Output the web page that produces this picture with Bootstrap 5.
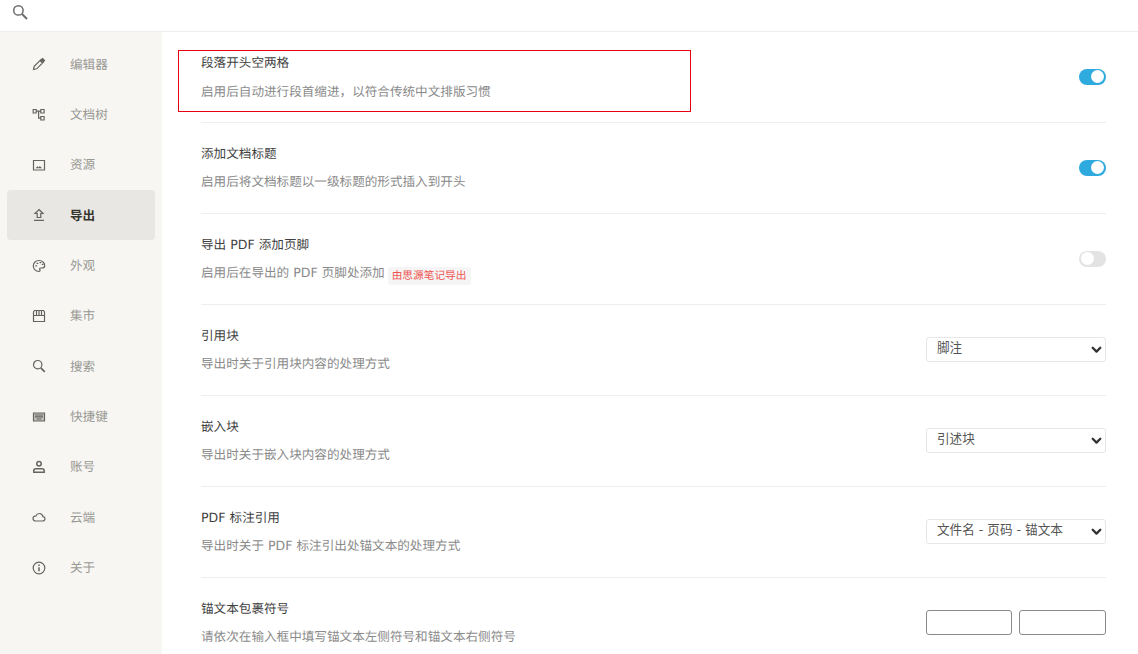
<!DOCTYPE html>
<html lang="zh-CN">

<head>
    <meta charset="UTF-8" />
    <meta name="viewport" content="width=device-width, initial-scale=1" />
    <title>导出设置</title>
    <link href="https://cdn.jsdelivr.net/npm/bootstrap@5.3.3/dist/css/bootstrap.min.css" rel="stylesheet">
    <script src="https://cdn.jsdelivr.net/npm/bootstrap@5.3.3/dist/js/bootstrap.bundle.min.js"></script>

    <style>
        html,
        body {
            height: 100%;
            overflow: hidden;
        }

        body {
            background: #fff;
            font-family: "DejaVu Sans", "Noto Sans CJK SC", sans-serif;
            font-size: 12.6px;
            color: #3f3f3f;
            text-rendering: geometricPrecision;
        }

        .top-bar {
            height: 32px;
            border-bottom: 1px solid #eeeeee;
            padding-left: 12px;
            padding-top: 3px;
        }

        .side-nav {
            width: 162px;
            height: 622px;
            background: #f7f6f3;
            padding: 7px 7px 0;
        }

        .side-item {
            height: 50.35px;
            padding-left: 24px;
            gap: 23px;
            color: #999994;
            border-radius: 4px;
        }

        .side-item span {
            padding-top: 2px;
        }

        .side-item svg {
            width: 16px;
            height: 16px;
            flex: none;
            fill: none;
            stroke: #66645f;
            stroke-width: 1.2;
        }

        .side-item.on {
            background: #e8e7e3;
            color: #37352f;
            font-weight: 700;
        }

        .set-pane {
            flex: 1;
            padding: 0 32px 0 39px;
            position: relative;
        }

        .set-row {
            height: 91px;
            border-bottom: 1px solid #eeeeee;
        }

        .set-title {
            padding-top: 21.5px;
            line-height: 18px;
            color: #3f3f3f;
        }

        .set-desc {
            margin-top: 10px;
            line-height: 18px;
            color: #8a8a8a;
        }

        .set-row:first-of-type .set-title {
            padding-top: 22px;
        }

        .set-row:first-of-type .set-desc {
            margin-top: 11px;
        }

        .red-tag {
            display: inline-block;
            background: #f5f5f5;
            color: #ef5350;
            font-size: 10.7px;
            line-height: 18px;
            padding: 0 4px;
            margin-left: 3px;
            border-radius: 3px;
            vertical-align: -2px;
        }

        .red-box {
            position: absolute;
            left: 16px;
            top: 18px;
            width: 513px;
            height: 62px;
            border: 1px solid #e60012;
            pointer-events: none;
        }

        .set-switch {
            width: 27px;
            height: 16.5px;
            border-radius: 9px;
            background: #e3e3e3;
            position: relative;
            flex: none;
        }

        .set-switch::after {
            content: "";
            position: absolute;
            left: 1.5px;
            top: 1.7px;
            width: 13px;
            height: 13px;
            border-radius: 50%;
            background: #fff;
        }

        .set-switch.is-on {
            background: #2eaadf;
        }

        .set-switch.is-on::after {
            left: 12px;
        }

        .set-select.form-select {
            width: 180px;
            height: 25px;
            min-height: 0;
            margin-top: -1px;
            font-size: 12.6px;
            line-height: 16px;
            padding: 2px 24px 5px 10px;
            color: #555555;
            border: 1px solid #e6e6e6;
            border-radius: 3px;
            background-position: right 3px center;
            background-size: 11px 11px;
            background-image: url("data:image/svg+xml,%3csvg xmlns='http://www.w3.org/2000/svg' viewBox='0 0 16 16'%3e%3cpath fill='none' stroke='%23333' stroke-linecap='round' stroke-linejoin='round' stroke-width='3.4' d='M2.5 5.5l5.5 5.5 5.5-5.5'/%3e%3c/svg%3e");
        }

        .set-inputs {
            width: 180px;
            gap: 7px;
            margin-top: -1px;
        }

        .set-inputs .form-control {
            height: 25px;
            min-height: 0;
            padding: 2px 6px;
            font-size: 12.6px;
            border: 1px solid #8a8a8a;
            border-radius: 3px;
        }

        .set-inputs .form-control:first-child {
            flex: 0 0 86px;
            width: 86px;
        }

        .set-inputs .form-control:last-child {
            flex: 1 1 0;
        }
    </style>
</head>

<body>
    <div class="top-bar">
        <svg width="17" height="17" viewBox="0 0 17 17" fill="none" stroke="#6b6b6b" stroke-width="1.5">
            <circle cx="6.4" cy="6.4" r="4.7" />
            <path d="M10 10l5 5" stroke-width="1.9" />
        </svg>
    </div>

    <div class="d-flex">
        <div class="side-nav">
            <div class="side-item d-flex align-items-center">
                <svg viewBox="0 0 16 16"><path d="M2.500 13.500l.7-3.200L10 3.500l2.500 2.500-6.800 6.800zM9 4.500l2.500 2.500" /><path d="M11.500 2.500l2 2-1 1-2-2z" fill="#66645f" /></svg>
                <span>编辑器</span>
            </div>
            <div class="side-item d-flex align-items-center">
                <svg viewBox="0 0 16 16"><path d="M2.200 2.500h3v3.500h-3zM9.800 2.500h3.300v3.500H9.800zM9.800 9.500h3.300v3.500H9.800zM5.200 4.200h4.600M7.600 4.200v7h2.200" /></svg>
                <span>文档树</span>
            </div>
            <div class="side-item d-flex align-items-center">
                <svg viewBox="0 0 16 16"><path d="M2.500 3.500h11v9.500h-11z" /><path d="M4.500 11.300l2-2 1.200 1.200 1-1.400 2.500 2.200z" fill="#66645f" stroke="none" /></svg>
                <span>资源</span>
            </div>
            <div class="side-item on d-flex align-items-center">
                <svg viewBox="0 0 16 16"><path d="M8 2.500l4 4H9.800v4H6.200v-4H4zM3 13.300h10" /></svg>
                <span>导出</span>
            </div>
            <div class="side-item d-flex align-items-center">
                <svg viewBox="0 0 16 16"><path d="M8 2.500c3.200 0 5.700 2.200 5.700 4.900 0 1.800-1.400 2.600-3 2.600H9.500c-1 0-1.100 1-.6 1.600.5.700.1 1.900-.9 1.900-3.200 0-5.700-2.500-5.700-5.600S4.800 2.500 8 2.500z" /><path d="M4.800 7.800h.8M6 5.300h.8M9 4.600h.8M11.200 6.300h.8" stroke-linecap="round" stroke-width="1.300" /></svg>
                <span>外观</span>
            </div>
            <div class="side-item d-flex align-items-center">
                <svg viewBox="0 0 16 16"><path d="M3.500 2.500h9l1 1.500v3.500h-11V4zM2.500 7.500v6h11v-6M5.500 2.800v4.500M8 2.800v4.500M10.500 2.800v4.500" /></svg>
                <span>集市</span>
            </div>
            <div class="side-item d-flex align-items-center">
                <svg viewBox="0 0 16 16"><circle cx="6.700" cy="6.700" r="4.200" /><path d="M9.800 9.800l4 4" stroke-width="1.700" /></svg>
                <span>搜索</span>
            </div>
            <div class="side-item d-flex align-items-center">
                <svg viewBox="0 0 16 16"><path d="M2.500 4h11v8h-11z" fill="#66645f" fill-opacity=".35" /><path d="M4 6h8M4 7.800h8M5.500 10h5" stroke-width="1.200" /></svg>
                <span>快捷键</span>
            </div>
            <div class="side-item d-flex align-items-center">
                <svg viewBox="0 0 16 16"><circle cx="8" cy="4.800" r="2.200" stroke-width="1.500" /><path d="M2.800 13.300v-1.600c0-1.300 1-2 2.200-2h6c1.200 0 2.200.7 2.200 2v1.600z" stroke-width="1.500" /></svg>
                <span>账号</span>
            </div>
            <div class="side-item d-flex align-items-center">
                <svg viewBox="0 0 16 16"><path d="M4.800 12h6.700c1.500 0 2.500-1 2.500-2.200 0-1.200-.9-2.100-2-2.200C11.600 5.600 10 4.500 8.300 4.500c-1.500 0-2.800 1-3.300 2.400-1.700.1-3 1.200-3 2.600 0 1.400 1.200 2.500 2.800 2.500z" /></svg>
                <span>云端</span>
            </div>
            <div class="side-item d-flex align-items-center">
                <svg viewBox="0 0 16 16"><circle cx="8" cy="8" r="5.800" /><path d="M8 7.300v4M8 4.600v1.300" stroke-width="1.500" /></svg>
                <span>关于</span>
            </div>
        </div>

        <div class="set-pane">
            <div class="set-row d-flex justify-content-between align-items-center">
                <div class="align-self-start">
                    <div class="set-title">段落开头空两格</div>
                    <div class="set-desc">启用后自动进行段首缩进，以符合传统中文排版习惯</div>
                </div>
                <div class="set-switch is-on"></div>
            </div>
            <div class="set-row d-flex justify-content-between align-items-center">
                <div class="align-self-start">
                    <div class="set-title">添加文档标题</div>
                    <div class="set-desc">启用后将文档标题以一级标题的形式插入到开头</div>
                </div>
                <div class="set-switch is-on"></div>
            </div>
            <div class="set-row d-flex justify-content-between align-items-center">
                <div class="align-self-start">
                    <div class="set-title">导出 PDF 添加页脚</div>
                    <div class="set-desc">启用后在导出的 PDF 页脚处添加<span class="red-tag">由思源笔记导出</span></div>
                </div>
                <div class="set-switch"></div>
            </div>
            <div class="set-row d-flex justify-content-between align-items-center">
                <div class="align-self-start">
                    <div class="set-title">引用块</div>
                    <div class="set-desc">导出时关于引用块内容的处理方式</div>
                </div>
                <select class="form-select set-select"><option>脚注</option></select>
            </div>
            <div class="set-row d-flex justify-content-between align-items-center">
                <div class="align-self-start">
                    <div class="set-title">嵌入块</div>
                    <div class="set-desc">导出时关于嵌入块内容的处理方式</div>
                </div>
                <select class="form-select set-select"><option>引述块</option></select>
            </div>
            <div class="set-row d-flex justify-content-between align-items-center">
                <div class="align-self-start">
                    <div class="set-title">PDF 标注引用</div>
                    <div class="set-desc">导出时关于 PDF 标注引出处锚文本的处理方式</div>
                </div>
                <select class="form-select set-select"><option>文件名 - 页码 - 锚文本</option></select>
            </div>
            <div class="set-row d-flex justify-content-between align-items-center">
                <div class="align-self-start">
                    <div class="set-title">锚文本包裹符号</div>
                    <div class="set-desc">请依次在输入框中填写锚文本左侧符号和锚文本右侧符号</div>
                </div>
                <div class="set-inputs d-flex">
                    <input class="form-control" type="text" />
                    <input class="form-control" type="text" />
                </div>
            </div>
            <div class="red-box"></div>
        </div>
    </div>
</body>

</html>
